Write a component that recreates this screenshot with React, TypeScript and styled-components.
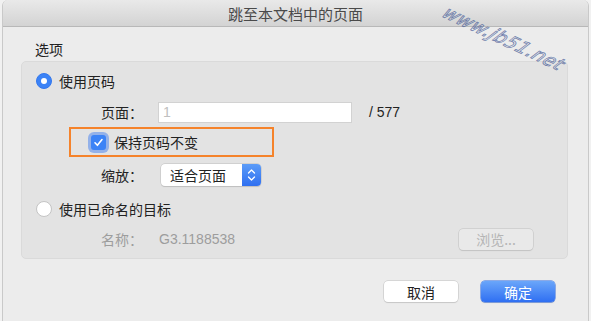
import styled, { createGlobalStyle } from "styled-components";

const GlobalStyle = createGlobalStyle`
  html, body {
    margin: 0;
    padding: 0;
    background: #f1f1f1;
    overflow: hidden;
  }
  body {
    font-family: "Noto Sans CJK SC", "Liberation Sans", sans-serif;
    -webkit-font-smoothing: antialiased;
  }
`;

const Window = styled.div`
  position: relative;
  margin-left: 2px;
  width: 585px;
  height: 330px;
  background: #ececec;
  border-left: 1px solid #c9c9c9;
  border-right: 1px solid #c9c9c9;
  border-radius: 6px 6px 0 0;
  overflow: hidden;
`;

const TitleBar = styled.div`
  height: 27px;
  display: flex;
  align-items: center;
  justify-content: center;
  background: linear-gradient(#e9e9e9, #d3d3d3);
  border-bottom: 1px solid #b8b8b8;
  box-sizing: border-box;
  font-size: 15px;
  color: #4a4a4a;
`;

const Body = styled.div`
  padding: 12px 20px 0 18px;
`;

const SectionLabel = styled.div`
  margin-left: 14px;
  font-size: 14px;
  line-height: 20px;
  color: #222;
`;

const Group = styled.div`
  margin-top: 2px;
  height: 198px;
  box-sizing: border-box;
  background: #e3e3e3;
  border: 1px solid #dadada;
  border-radius: 5px;
  padding: 9px 34px 0 13px;
  display: flex;
  flex-direction: column;
`;

const Row = styled.div<{ $top: number; $h: number; $indent?: number }>`
  display: flex;
  align-items: center;
  margin-top: ${({ $top }) => $top}px;
  height: ${({ $h }) => $h}px;
  padding-left: ${({ $indent }) => $indent ?? 0}px;
  font-size: 14px;
  color: #222;
`;

const Radio = styled.span<{ $on?: boolean }>`
  width: 16px;
  height: 16px;
  box-sizing: border-box;
  border-radius: 50%;
  display: inline-flex;
  align-items: center;
  justify-content: center;
  margin-right: 7px;
  background: ${({ $on }) => ($on ? "#3c83f6" : "#ffffff")};
  border: 1px solid ${({ $on }) => ($on ? "#3478ee" : "#c4c4c4")};
  &::after {
    content: "";
    display: ${({ $on }) => ($on ? "block" : "none")};
    width: 6px;
    height: 6px;
    border-radius: 50%;
    background: #fff;
  }
`;

const FieldLabel = styled.span<{ $muted?: boolean }>`
  width: 57px;
  color: ${({ $muted }) => ($muted ? "#9d9d9d" : "#222")};
`;

const TextInput = styled.div`
  width: 194px;
  height: 21px;
  box-sizing: border-box;
  background: #fff;
  border: 1px solid #d2d2d2;
  padding-left: 4px;
  display: flex;
  align-items: center;
  font-family: "Liberation Sans", sans-serif;
  font-size: 14px;
  color: #c0c0c0;
`;

const PageTotal = styled.span`
  margin-left: 17px;
  font-family: "Liberation Sans", sans-serif;
  font-size: 14px;
  color: #222;
`;

const Highlight = styled.div`
  margin-left: 34px;
  width: 205px;
  height: 30px;
  box-sizing: border-box;
  border: 2px solid #f5832b;
  display: flex;
  align-items: center;
  padding-left: 20px;
`;

const CheckBox = styled.span`
  width: 15px;
  height: 15px;
  border-radius: 3px;
  background: #3c83f6;
  box-shadow: 0 0 0 3px rgba(120, 160, 235, 0.75);
  display: inline-flex;
  align-items: center;
  justify-content: center;
  margin-right: 8px;
`;

const Select = styled.div`
  margin-left: 3px;
  width: 100px;
  height: 22px;
  box-sizing: border-box;
  border-radius: 4px;
  background: #fff;
  box-shadow: 0 0 0 0.5px #bdbdbd, 0 1px 1px rgba(0, 0, 0, 0.15);
  display: flex;
  overflow: hidden;
`;

const SelectText = styled.span`
  flex: 1;
  padding-left: 9px;
  display: flex;
  align-items: center;
  font-size: 14px;
  color: #222;
`;

const Stepper = styled.span`
  width: 19px;
  background: linear-gradient(#5b9cf8, #2f6ff0);
  display: flex;
  align-items: center;
  justify-content: center;
`;

const NameValue = styled.span`
  margin-left: 1px;
  font-family: "Liberation Sans", sans-serif;
  font-size: 14px;
  color: #9d9d9d;
  flex: 1;
`;

const Button = styled.div<{ $primary?: boolean; $disabled?: boolean }>`
  width: 74px;
  height: 21px;
  box-sizing: border-box;
  border-radius: 4px;
  display: flex;
  align-items: center;
  justify-content: center;
  font-size: 14px;
  color: ${({ $primary, $disabled }) =>
    $primary ? "#fff" : $disabled ? "#b5b5b5" : "#222"};
  background: ${({ $primary, $disabled }) =>
    $primary
      ? "linear-gradient(#6aa6fa, #2f6ff2)"
      : $disabled
      ? "#e9e9e9"
      : "#ffffff"};
  box-shadow: ${({ $primary }) =>
    $primary
      ? "0 0 0 0.5px #2c68e0, 0 1px 1px rgba(0,0,0,0.15)"
      : "0 0 0 0.5px #bfbfbf, 0 1px 1px rgba(0,0,0,0.12)"};
`;

const Footer = styled.div`
  display: flex;
  justify-content: flex-end;
  gap: 23px;
  padding: 22px 13px 0 0;
`;

const Watermark = styled.div`
  position: absolute;
  top: 3px;
  left: 450px;
  transform: rotate(25deg) skewX(-18deg);
  transform-origin: left top;
  font-family: "DejaVu Sans", sans-serif;
  font-size: 18px;
  font-style: italic;
  letter-spacing: 0.5px;
  color: transparent;
  -webkit-text-stroke: 0.8px rgba(70, 90, 150, 0.75);
  pointer-events: none;
  white-space: nowrap;
`;

export default function App() {
  return (
    <>
      <GlobalStyle />
      <Window>
        <TitleBar>跳至本文档中的页面</TitleBar>
        <Body>
          <SectionLabel>选项</SectionLabel>
          <Group>
            <Row $top={0} $h={20} $indent={1}>
              <Radio $on />
              使用页码
            </Row>
            <Row $top={10} $h={22} $indent={66}>
              <FieldLabel>页面：</FieldLabel>
              <TextInput>1</TextInput>
              <PageTotal>/ 577</PageTotal>
            </Row>
            <Row $top={4} $h={30}>
              <Highlight>
                <CheckBox>
                  <svg width="11" height="11" viewBox="0 0 11 11">
                    <path
                      d="M2 5.8 L4.4 8.3 L9 2.6"
                      fill="none"
                      stroke="#fff"
                      strokeWidth="1.6"
                      strokeLinecap="round"
                      strokeLinejoin="round"
                    />
                  </svg>
                </CheckBox>
                保持页码不变
              </Highlight>
            </Row>
            <Row $top={7} $h={22} $indent={66}>
              <FieldLabel>缩放：</FieldLabel>
              <Select>
                <SelectText>适合页面</SelectText>
                <Stepper>
                  <svg width="9" height="14" viewBox="0 0 9 14">
                    <path
                      d="M1.5 5 L4.5 2 L7.5 5 M1.5 9 L4.5 12 L7.5 9"
                      fill="none"
                      stroke="#fff"
                      strokeWidth="1.3"
                      strokeLinecap="round"
                      strokeLinejoin="round"
                    />
                  </svg>
                </Stepper>
              </Select>
            </Row>
            <Row $top={13} $h={20} $indent={1}>
              <Radio />
              使用已命名的目标
            </Row>
            <Row $top={9} $h={22} $indent={66}>
              <FieldLabel $muted>名称：</FieldLabel>
              <NameValue>G3.1188538</NameValue>
              <Button $disabled>浏览...</Button>
            </Row>
          </Group>
          <Footer>
            <Button>取消</Button>
            <Button $primary>确定</Button>
          </Footer>
        </Body>
        <Watermark>www.jb51.net</Watermark>
      </Window>
    </>
  );
}
